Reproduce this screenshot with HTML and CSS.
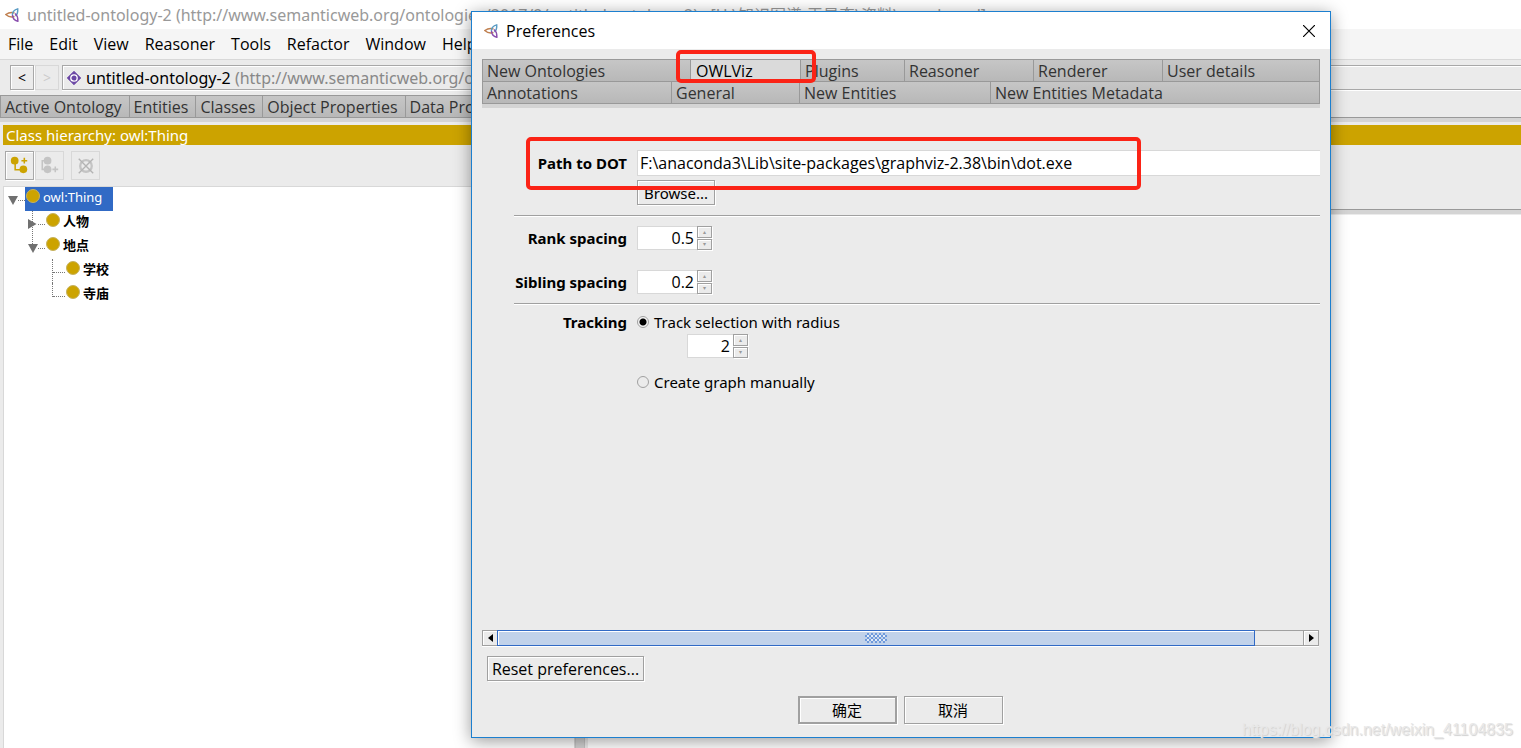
FILE: index.html
```html
<!DOCTYPE html>
<html lang="en">
<head>
<meta charset="utf-8">
<title>Preferences</title>
<link rel="stylesheet" href="styles.css">
</head>
<body>
<svg class="defs" aria-hidden="true">
  <symbol id="logo" viewBox="0 0 14 14">
    <path d="M9.500 5C6 3.800 3 5 0.800 6.500C3 8.500 6 9.500 9.500 8.500" fill="none" stroke="#c08050" stroke-width="1.500"/>
    <path d="M7.500 7C7 4 9.500 1.800 12.700 0.800C13 4 12.500 6.500 10.500 8" fill="none" stroke="#5b9cc4" stroke-width="1.400"/>
    <path d="M7.500 7C7.500 10.500 10 12.500 12.800 13.200C13 10 12.500 7.500 10 5.500" fill="none" stroke="#8a4fae" stroke-width="1.500"/>
  </symbol>
</svg>
<div class="app">
  <header class="titlebar">
    <svg class="logo"><use href="#logo"/></svg>
    <span>untitled-ontology-2 (http://www.semanticweb.org/ontologies/2017/9/untitled-ontology-2) : [H:\知识图谱-王昊奋\资料\people.owl]</span>
  </header>
  <nav class="menubar">
    <button>File</button><button>Edit</button><button>View</button><button>Reasoner</button><button>Tools</button><button>Refactor</button><button>Window</button><button>Help</button>
  </nav>
  <div class="toolbar">
    <button class="nav-btn">&lt;</button>
    <button class="nav-btn" disabled>&gt;</button>
    <div class="location">
      <svg class="diamond" viewBox="0 0 14 14"><path d="M7 0.200L13.800 7L7 13.800L0.200 7Z" fill="#6b47a5" stroke="#6b47a5" stroke-width=".8"/><circle cx="7" cy="7" r="3.200" fill="#6b47a5" stroke="#fff" stroke-width="1.300"/></svg>
      <span>untitled-ontology-2 <span class="muted">(http://www.semanticweb.org/ontologies/2017/9/untitled-ontology-2)</span></span>
    </div>
  </div>
  <div class="tabs app-tabs">
    <button>Active Ontology</button><button>Entities</button><button>Classes</button><button>Object Properties</button><button>Data Properties</button>
  </div>
  <main class="panes">
    <section class="left-pane">
      <h2 class="pane-title">Class hierarchy: owl:Thing</h2>
      <div class="tree-tools">
        <button aria-label="Add subclass"><svg viewBox="0 0 28 28"><g fill="#cca300"><circle cx="9" cy="9" r="4"/><circle cx="18" cy="18" r="4"/></g><path d="M9.500 12v6.500H15M16 9h6M19 6v6" fill="none" stroke="#cca300" stroke-width="1.600"/></svg></button>
        <button aria-label="Add sibling class" disabled><svg viewBox="0 0 28 28"><g fill="#c4c4c4"><circle cx="12" cy="9" r="4"/><circle cx="12" cy="18" r="4"/></g><path d="M10 9H6.500v9H10M17 18h6M20 15v6" fill="none" stroke="#c4c4c4" stroke-width="1.600"/></svg></button>
        <button class="spaced" aria-label="Delete class" disabled><svg viewBox="0 0 28 28"><circle cx="14.500" cy="14.500" r="6" fill="none" stroke="#c4c4c4" stroke-width="2.400"/><path d="M7 7l15 15M22 7L7 22" stroke="#b4b4b4" stroke-width="1.400"/></svg></button>
      </div>
      <div class="tree">
        <div class="node root"><i class="arrow"></i><i class="dots"></i><span class="item selected"><i class="ball"></i>owl:Thing</span></div>
        <div class="branch">
          <div class="node"><i class="arrow closed"></i><i class="dots"></i><span class="item"><i class="ball"></i>人物</span></div>
          <div class="node"><i class="arrow"></i><i class="dots"></i><span class="item"><i class="ball"></i>地点</span></div>
        </div>
        <div class="leaves">
          <div class="node"><i class="dots long"></i><span class="item"><i class="ball"></i>学校</span></div>
          <div class="node"><i class="dots long"></i><span class="item"><i class="ball"></i>寺庙</span></div>
        </div>
      </div>
    </section>
    <div class="divider"></div>
    <section class="right-pane">
      <h2 class="pane-title"></h2>
      <div class="blank"></div>
      <div class="view"></div>
    </section>
  </main>
</div>

<div class="dialog" role="dialog" aria-labelledby="dlg-title">
  <header class="dialog-title">
    <svg class="logo"><use href="#logo"/></svg>
    <h1 id="dlg-title">Preferences</h1>
    <button class="close" aria-label="Close"><svg viewBox="0 0 12 12"><path d="M0 0L12 12M12 0L0 12" stroke="#000" stroke-width="1.200"/></svg></button>
  </header>
  <div class="dialog-body">
    <div class="tab-area">
      <div class="tabs row-a"><button>New Ontologies</button><button class="active">OWLViz</button><button>Plugins</button><button>Reasoner</button><button>Renderer</button><button>User details</button></div>
      <div class="tabs row-b"><button>Annotations</button><button>General</button><button>New Entities</button><button>New Entities Metadata</button></div>
    </div>
    <form class="form">
      <label class="path-label" for="dot">Path to DOT</label>
      <div class="path"><input id="dot" class="path-input" type="text" value="F:\anaconda3\Lib\site-packages\graphviz-2.38\bin\dot.exe"><button type="button" class="btn browse">Browse...</button></div>
      <hr>
      <label for="rank">Rank spacing</label>
      <div class="spinner"><input id="rank" type="text" value="0.5"><span class="steps"><button type="button" aria-label="Increase rank spacing">▴</button><button type="button" aria-label="Decrease rank spacing">▾</button></span></div>
      <label class="second" for="sibling">Sibling spacing</label>
      <div class="spinner second"><input id="sibling" type="text" value="0.2"><span class="steps"><button type="button" aria-label="Increase sibling spacing">▴</button><button type="button" aria-label="Decrease sibling spacing">▾</button></span></div>
      <hr class="tight">
      <span class="group-label">Tracking</span>
      <div class="tracking">
        <label class="radio"><input type="radio" name="track" checked>Track selection with radius</label>
        <div class="spinner small"><input aria-label="Radius" type="text" value="2"><span class="steps"><button type="button" aria-label="Increase radius">▴</button><button type="button" aria-label="Decrease radius">▾</button></span></div>
        <label class="radio manual"><input type="radio" name="track">Create graph manually</label>
      </div>
    </form>
    <div class="scrollbar">
      <button aria-label="Scroll left"><svg viewBox="0 0 5 8"><path d="M5 0v8L0 4z"/></svg></button>
      <div class="track"><div class="thumb"><i class="grip"></i></div></div>
      <button aria-label="Scroll right"><svg viewBox="0 0 5 8"><path d="M0 0v8l5-4z"/></svg></button>
    </div>
    <button class="btn reset">Reset preferences...</button>
    <div class="actions"><button class="btn ok">确定</button><button class="btn">取消</button></div>
  </div>
  <div class="mark mark-tab"></div>
  <div class="mark mark-path"></div>
</div>
<div class="watermark">https://blog.csdn.net/weixin_41104835</div>
</body>
</html>
```

FILE: styles.css
```css
* { box-sizing: border-box; }
body {
  margin: 0;
  height: 100vh;
  overflow: hidden;
  position: relative;
  font: 16px/20px "Open Sans", "Noto Sans CJK SC", sans-serif;
  color: #000;
  background: #ebebeb;
}
button, input { font: inherit; color: inherit; margin: 0; padding: 0; border-radius: 0; }
button { border: 0; background: none; white-space: nowrap; }
h1, h2 { margin: 0; font: inherit; }
.defs { position: absolute; width: 0; height: 0; }
.logo { width: 14px; height: 14px; flex: none; }

.app { height: 100%; display: flex; flex-direction: column; }
.titlebar, .location { font-family: "Noto Sans", "Noto Sans CJK SC", sans-serif; }
.titlebar {
  height: 29px;
  flex: none;
  display: flex;
  align-items: center;
  gap: 8px;
  padding-left: 5px;
  background: #fff;
  color: #999;
  white-space: nowrap;
  overflow: hidden;
}
.menubar {
  height: 31px;
  flex: none;
  display: flex;
  align-items: center;
  gap: 16px;
  padding-left: 8px;
  background: #f5f5f5;
  border-bottom: 1px solid #d8d8d8;
}
.toolbar {
  height: 35px;
  flex: none;
  display: flex;
  align-items: flex-start;
  gap: 1px;
  padding: 5px 0 0 10px;
}
.nav-btn, .tree-tools button {
  border: 1px solid #a8a8a8;
  box-shadow: inset 1px 1px #fff, 1px 1px #fff;
}
.nav-btn { width: 24px; height: 25px; font-size: 14px; }
.nav-btn:disabled, .tree-tools button:disabled { border-color: #d8d8d8; box-shadow: none; color: #ccc; }
.location {
  flex: 1;
  height: 25px;
  margin-left: 2px;
  display: flex;
  align-items: center;
  gap: 5px;
  padding-left: 4px;
  border: 1px solid #a8a8a8;
  border-right: 0;
  box-shadow: inset 1px 1px #fff, 0 1px #fff;
  white-space: nowrap;
  overflow: hidden;
}
.diamond { width: 14px; height: 14px; flex: none; }
.muted { color: #888; }

.tabs { display: flex; color: #333; }
.tabs button {
  height: 22px;
  padding: 0 7px 0 4px;
  border-top: 1px solid #999;
  border-left: 1px solid #999;
  background: linear-gradient(#c6c6c6, #b8b8b8);
  text-align: left;
  line-height: 20px;
}
.app-tabs { flex: none; border-bottom: 1px solid #999; box-shadow: 0 4px #d4d4d4; }

.panes { flex: 1; min-height: 0; display: flex; padding-top: 7px; }
.left-pane { width: 37.8%; flex: none; display: flex; flex-direction: column; padding-left: 3px; }
.pane-title {
  height: 20px;
  flex: none;
  padding-left: 3px;
  background: #cca300;
  color: #fff;
  font: 15px/20px "Noto Sans", sans-serif;
}
.left-pane .pane-title { margin-right: -10px; }
.tree-tools { display: flex; gap: 1px; padding: 6px 0 6px 2px; flex: none; }
.tree-tools button { width: 29px; height: 29px; }
.tree-tools svg { display: block; width: 27px; height: 27px; }
.tree-tools .spaced { margin-left: 6px; }
.tree {
  flex: 1;
  border: 1px solid #d8d8d8;
  border-bottom: 0;
  background: #fff;
  font-size: 13px;
}
.node { height: 24px; display: flex; }
.arrow {
  width: 10px;
  height: 9px;
  flex: none;
  margin: 9px 0 0 4px;
  background: #707070;
  clip-path: polygon(0 0, 100% 0, 50% 100%);
}
.arrow.closed { margin-top: 8px; height: 10px; clip-path: polygon(0 0, 85% 50%, 0 100%); }
.dots { width: 7px; height: 14px; border-bottom: 1px dotted #777; }
.item { display: flex; align-items: flex-start; gap: 3px; padding-left: 1px; font-weight: 700; line-height: 20px; }
.selected { padding-right: 11px; background: #316ac5; color: #fff; font: 13px/20px "Noto Sans", sans-serif; }
.ball { width: 14px; height: 14px; margin-top: 2px; border-radius: 50%; background: #cca300; border: 1px solid #c6b260; }
.branch {
  padding-left: 20px;
  background: repeating-linear-gradient(#777 0 1px, transparent 1px 2px) 28px 0 / 1px 34px no-repeat;
}
.leaves { margin-left: 48px; }
.leaves .node { border-left: 1px dotted #777; }
.leaves .node:last-child { height: 14px; }
.dots.long { width: 12px; }
.divider { width: 10px; flex: none; margin-top: 20px; background: #d2d2d2; border: 1px solid #c4c4c4; border-width: 0 1px; }
.right-pane { flex: 1; display: flex; flex-direction: column; padding-left: 3px; }
.blank { height: 65px; flex: none; border-bottom: 1px solid #999; box-shadow: 0 4px #d4d4d4; }
.view { flex: 1; margin-top: 5px; background: #fff; }

.dialog {
  position: absolute;
  left: 471px;
  right: 190px;
  top: 11px;
  bottom: 10px;
  display: flex;
  flex-direction: column;
  border: 1px solid #1c7fcf;
  background: #ebebeb;
  box-shadow: 0 3px 16px rgba(0, 0, 0, .4);
}
.dialog-title { height: 37px; flex: none; display: flex; align-items: center; gap: 8px; padding: 0 15px 0 12px; background: #fff; }
.close { margin-left: auto; width: 12px; height: 12px; }
.close svg { display: block; width: 12px; height: 12px; }
.dialog-body { flex: 1; min-height: 0; display: flex; flex-direction: column; padding: 10px 10px 13px; }
.tab-area { flex: none; border-right: 1px solid #999; border-bottom: 1px solid #999; box-shadow: 0 4px #d4d4d4; }
.row-a, .row-b { display: grid; }
.row-a { grid-template-columns: 208fr 110fr 104fr 129fr 129fr 157fr; }
.row-b { grid-template-columns: 189fr 128fr 191fr 329fr; }
.tabs .active { color: #000; background: #dadada; padding-left: 5px; }

.form {
  flex: 1;
  min-height: 0;
  display: grid;
  grid-template-columns: 113px 1fr;
  align-content: start;
  column-gap: 10px;
  padding: 46px 0 0 32px;
}
.form > label, .group-label {
  display: flex;
  justify-content: flex-end;
  font: 700 15px/24px "Noto Sans", sans-serif;
  white-space: nowrap;
}
.form > .path-label { line-height: 26px; }
.path { display: flex; flex-direction: column; align-items: flex-start; gap: 4px; }
.path-input { width: 100%; height: 26px; padding-left: 2px; border: 1px solid #d8d8d8; border-right: 0; background: #fff; }
.btn { border: 1px solid #a0a0a0; box-shadow: inset 1px 1px #fff, 1px 1px #fff; }
.browse { height: 25px; width: 78px; font: 15px/20px "Noto Sans", sans-serif; }
.form hr { grid-column: 1 / -1; width: 100%; height: 2px; margin: 10px 0 9px; border: 0; border-top: 1px solid #a0a0a0; background: #fff; }
.form .tight { margin: 9px 0 7px; }
.spinner { display: flex; width: 75px; height: 24px; }
.spinner input { flex: 1; min-width: 0; padding-right: 3px; text-align: right; border: 1px solid #d8d8d8; border-right: 0; background: #fff; }
.steps { width: 15px; flex: none; display: grid; gap: 1px; }
.steps button { border: 1px solid #a0a0a0; box-shadow: inset 1px 1px #fff, 1px 1px #fff; font: 6px/8px "DejaVu Sans", sans-serif; color: #999; overflow: hidden; }
.second { margin-top: 20px; }
.form .group-label { line-height: 20px; }
.form .small { width: 61px; margin: 2px 0 0 50px; }
.radio { display: flex; align-items: center; gap: 5px; height: 20px; font: 15px/20px "Noto Sans", sans-serif; }
.radio input { appearance: none; width: 12px; height: 12px; border: 1px solid #a0a0a0; border-radius: 50%; background: #ebebeb; }
.radio input:checked { background: radial-gradient(circle, #000 0 3px, #f4f4f4 4px); }
.manual { margin-top: 14px; }

.scrollbar { flex: none; height: 16px; margin-right: 1px; display: flex; box-shadow: 0 1px #fff; }
.scrollbar button { width: 16px; border: 1px solid #a0a0a0; box-shadow: inset 1px 1px #fff; display: grid; place-items: center; }
.scrollbar svg { width: 5px; height: 8px; }
.scrollbar button:first-child { border-right: 0; width: 15px; }
.track { flex: 1; border: 1px solid #a0a0a0; border-width: 1px 0; }
.thumb { width: 94%; height: 16px; margin-top: -1px; display: grid; place-items: center; border: 1px solid #316ac5; background: #c1d2ea; box-shadow: inset 1px 1px #fff; }
.grip { width: 22px; height: 10px; background: conic-gradient(#6f9adc 25%, #e4edf8 0 50%, #6f9adc 0 75%, #c1d2ea 0) 0 0 / 4px 4px; }
.reset { flex: none; align-self: flex-start; width: 157px; height: 25px; margin: 10px 0 15px 5px; }
.actions { display: flex; justify-content: center; gap: 7px; padding-right: 2px; font-size: 15px; }
.actions .btn { width: 99px; height: 28px; }
.actions .ok { border-width: 2px; }

.mark { position: absolute; border: 4px solid #fb2316; border-radius: 5px; pointer-events: none; }
.mark-tab { left: 204px; top: 38px; width: 140px; height: 33px; }
.mark-path { left: 54px; top: 125px; width: 615px; height: 53px; }
.watermark {
  position: absolute;
  right: 8px;
  bottom: 8px;
  font: 16px/20px "Liberation Sans", sans-serif;
  color: #e8e8e8;
  text-shadow: 1px 1px 1px #d0d0d0;
}
```
